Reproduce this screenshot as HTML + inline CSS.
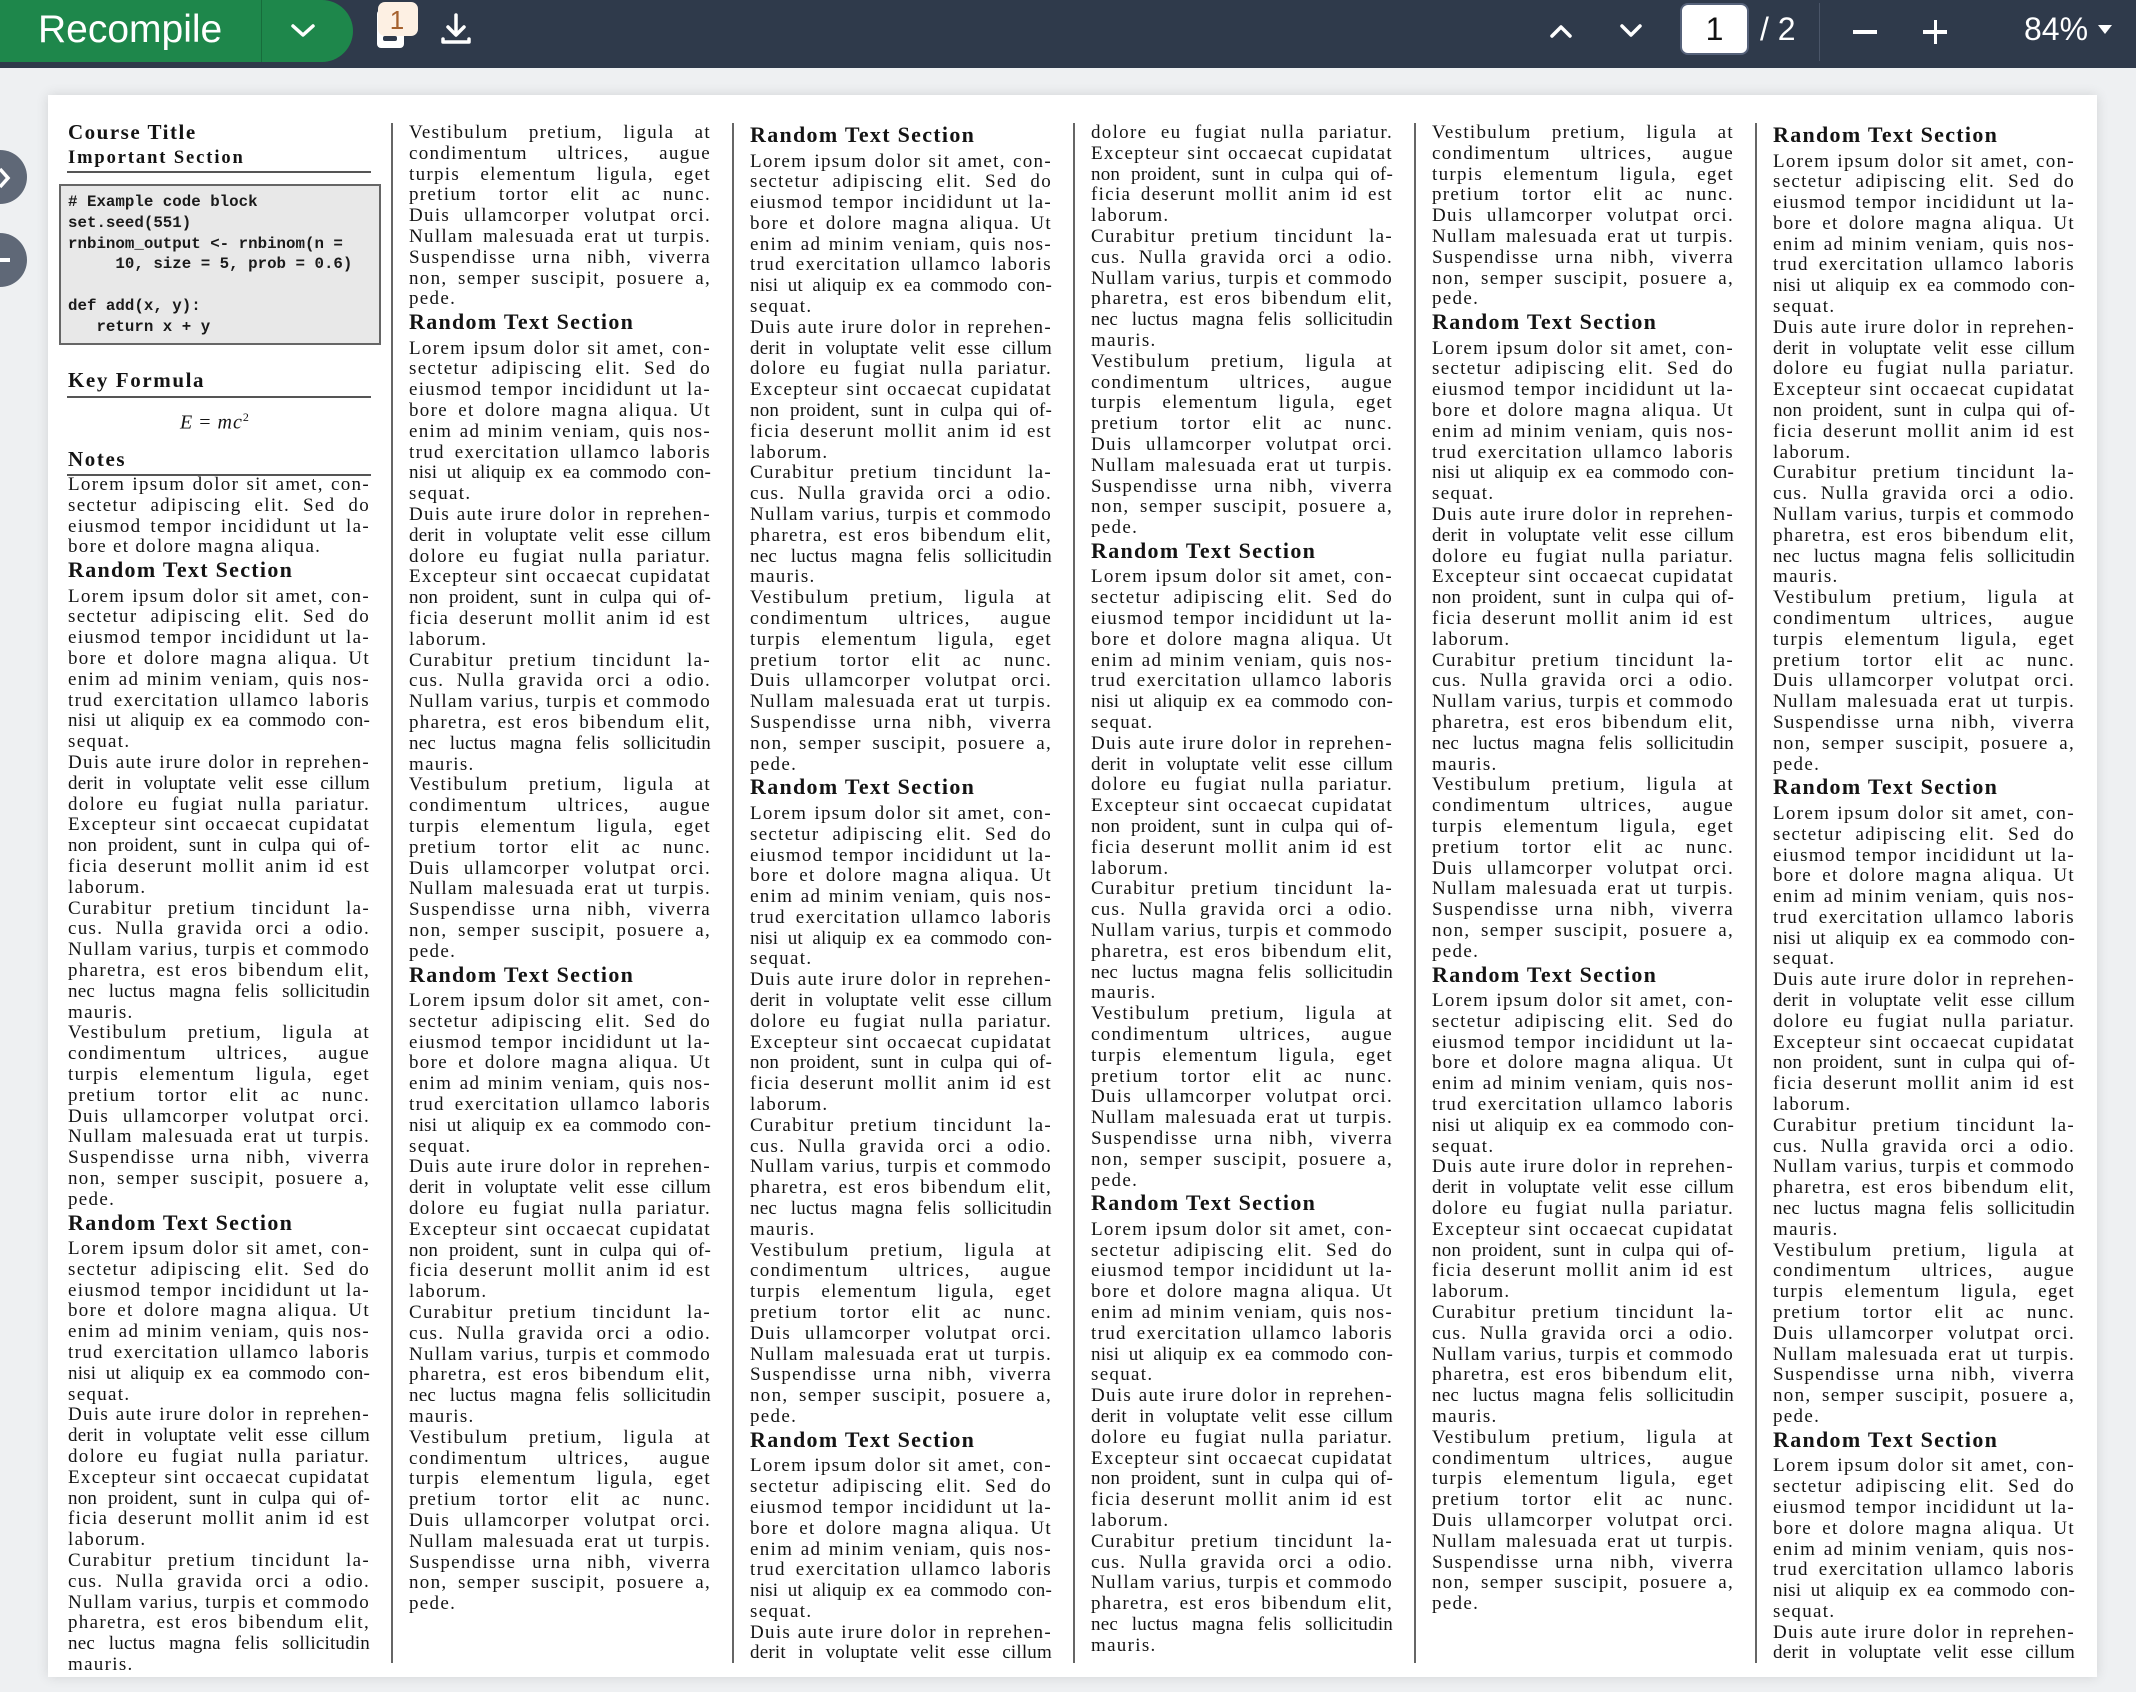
<!DOCTYPE html>
<html><head><meta charset="utf-8">
<style>
*{box-sizing:border-box}
body{margin:0;width:2136px;height:1692px;background:#eef0f2;position:relative;overflow:hidden;font-family:"Liberation Serif",serif}
#tb{position:absolute;left:0;top:0;width:2136px;height:68px;background:#2f3a4b}
#rc{position:absolute;left:0;top:0;width:353px;height:62px;background:#1e874b;border-radius:0 31px 31px 0}
#rc .t{position:absolute;left:38px;top:7px;font:39px/46px "Liberation Sans",sans-serif;color:#fff}
#rc .d{position:absolute;left:261px;top:0;width:1px;height:62px;background:#176c3b}
.wt{position:absolute;color:#fff;font-family:"Liberation Sans",sans-serif}
#page{position:absolute;left:48px;top:95px;width:2049px;height:1582px;background:#fff;box-shadow:0 0 12px rgba(0,0,0,.12)}
.col{position:absolute;top:123px;width:302px;font-size:19px;letter-spacing:1.3px;line-height:20.8px;color:#141414}
.col p{margin:0;height:20.8px;text-align:justify;text-align-last:justify;white-space:normal}
.col p.e{text-align-last:left}
.col p.t{letter-spacing:0.2px}
.col h2{margin:0;height:28.5px;font-size:22px;line-height:24px;font-weight:bold;letter-spacing:1.3px}
.dv{position:absolute;top:123px;width:2px;height:1540px;background:#666}
.circ{position:absolute;left:-27px;width:54px;height:54px;border-radius:50%;background:#5f6877}
.hd{position:absolute;left:68px;font-weight:bold;color:#141414;font-family:"Liberation Serif",serif}
</style></head><body>
<div id="tb">
 <div id="rc"><span class="t">Recompile</span><span class="d"></span>
  <svg style="position:absolute;left:290px;top:22px" width="26" height="18" viewBox="0 0 26 18"><path d="M3 4 L13 13 L23 4" stroke="#fff" stroke-width="3.5" fill="none" stroke-linecap="round" stroke-linejoin="round"/></svg>
 </div>
 <svg style="position:absolute;left:374px;top:0" width="50" height="52" viewBox="0 0 50 52"><rect x="3" y="10" width="27" height="38" rx="4" fill="#fff"/><rect x="9" y="36" width="14" height="5" rx="2" fill="#2f3a4b"/><rect x="4" y="2" width="40" height="34" rx="7" fill="#fdf0e3"/><text x="23" y="29" text-anchor="middle" font-family="Liberation Sans,sans-serif" font-size="26" fill="#a5612e">1</text></svg>
 <svg style="position:absolute;left:440px;top:12px" width="32" height="34" viewBox="0 0 32 34"><path d="M16 3 V22 M8 15 L16 23 L24 15 M3 27 V30 H29 V27" stroke="#fff" stroke-width="3.5" fill="none" stroke-linecap="round" stroke-linejoin="round"/></svg>
 <svg style="position:absolute;left:1548px;top:22px" width="26" height="18" viewBox="0 0 26 18"><path d="M4 14 L13 5 L22 14" stroke="#fff" stroke-width="3.5" fill="none" stroke-linecap="round" stroke-linejoin="round"/></svg>
 <svg style="position:absolute;left:1618px;top:22px" width="26" height="18" viewBox="0 0 26 18"><path d="M4 4 L13 13 L22 4" stroke="#fff" stroke-width="3.5" fill="none" stroke-linecap="round" stroke-linejoin="round"/></svg>
 <div style="position:absolute;left:1680px;top:3px;width:69px;height:52px;background:#fff;border-radius:8px;border:2px solid #56627a;font:32px/48px 'Liberation Sans',sans-serif;color:#111;text-align:center">1</div>
 <div class="wt" style="left:1760px;top:9px;font-size:32px;line-height:40px">/ 2</div>
 <div style="position:absolute;left:1819px;top:3px;width:1px;height:58px;background:#4a5568"></div>
 <div style="position:absolute;left:1853px;top:30px;width:24px;height:3.5px;background:#fff"></div>
 <div style="position:absolute;left:1923px;top:30px;width:24px;height:3.5px;background:#fff"></div>
 <div style="position:absolute;left:1933.5px;top:19.5px;width:3.5px;height:24px;background:#fff"></div>
 <div class="wt" style="left:2024px;top:9px;font-size:32px;line-height:40px">84%</div>
 <svg style="position:absolute;left:2097px;top:24px" width="16" height="12" viewBox="0 0 16 12"><path d="M1 1 H15 L8 10 Z" fill="#fff"/></svg>
</div>
<div class="circ" style="top:150px"></div>
<div class="circ" style="top:233px"></div>
<svg style="position:absolute;left:0;top:165px" width="14" height="26" viewBox="0 0 14 26"><path d="M0 4 L8 13 L0 22" stroke="#fff" stroke-width="3.5" fill="none"/></svg>
<div style="position:absolute;left:0;top:258px;width:10px;height:4px;background:#fff"></div>
<div id="page"></div>

<div class="hd" style="top:119px;font-size:21px;line-height:26px;letter-spacing:1.5px">Course Title</div>
<div class="hd" style="top:146px;font-size:18.5px;line-height:24px;letter-spacing:1.9px">Important Section</div>
<div style="position:absolute;left:67px;top:171px;width:304px;height:2px;background:#555"></div>
<div style="position:absolute;left:59px;top:184px;width:322px;height:161px;background:#e8e8e8;border:2px solid #666"></div>
<div style="position:absolute;left:68px;top:192px;font:bold 15.8px/20.8px 'Liberation Mono',monospace;color:#1a1a1a;white-space:pre"># Example code block
set.seed(551)
rnbinom_output &lt;- rnbinom(n =
     10, size = 5, prob = 0.6)

def add(x, y):
   return x + y</div>
<div class="hd" style="top:367px;font-size:21px;line-height:26px;letter-spacing:1.6px">Key Formula</div>
<div style="position:absolute;left:67px;top:396px;width:304px;height:2px;background:#555"></div>
<div style="position:absolute;left:180px;top:404px;font:italic 20px/26px 'Liberation Serif',serif;color:#141414;letter-spacing:1px">E <span style="font-style:normal">=</span> mc<sup style="font-size:12px;font-style:normal">2</sup></div>
<div class="hd" style="top:446px;font-size:21px;line-height:26px;letter-spacing:1.6px">Notes</div>
<div style="position:absolute;left:67px;top:474px;width:304px;height:2px;background:#555"></div>

<div class="dv" style="left:391px"></div>
<div class="dv" style="left:732px"></div>
<div class="dv" style="left:1073px"></div>
<div class="dv" style="left:1414px"></div>
<div class="dv" style="left:1755px"></div>

<div class="col" style="left:68px;top:475px">
<p>Lorem ipsum dolor sit amet, con-</p><p>sectetur adipiscing elit. Sed do</p><p>eiusmod tempor incididunt ut la-</p><p class="e">bore et dolore magna aliqua.</p>
<h2>Random Text Section</h2>
<p>Lorem ipsum dolor sit amet, con-</p><p>sectetur adipiscing elit. Sed do</p><p>eiusmod tempor incididunt ut la-</p><p>bore et dolore magna aliqua. Ut</p><p>enim ad minim veniam, quis nos-</p><p>trud exercitation ullamco laboris</p><p class="t">nisi ut aliquip ex ea commodo con-</p><p class="e">sequat.</p>
<p>Duis aute irure dolor in reprehen-</p><p class="t">derit in voluptate velit esse cillum</p><p>dolore eu fugiat nulla pariatur.</p><p>Excepteur sint occaecat cupidatat</p><p class="t">non proident, sunt in culpa qui of-</p><p>ficia deserunt mollit anim id est</p><p class="e">laborum.</p>
<p>Curabitur pretium tincidunt la-</p><p>cus. Nulla gravida orci a odio.</p><p>Nullam varius, turpis et commodo</p><p>pharetra, est eros bibendum elit,</p><p class="t">nec luctus magna felis sollicitudin</p><p class="e">mauris.</p>
<p>Vestibulum pretium, ligula at</p><p>condimentum ultrices, augue</p><p>turpis elementum ligula, eget</p><p>pretium tortor elit ac nunc.</p><p>Duis ullamcorper volutpat orci.</p><p>Nullam malesuada erat ut turpis.</p><p>Suspendisse urna nibh, viverra</p><p>non, semper suscipit, posuere a,</p><p class="e">pede.</p>
<h2>Random Text Section</h2>
<p>Lorem ipsum dolor sit amet, con-</p><p>sectetur adipiscing elit. Sed do</p><p>eiusmod tempor incididunt ut la-</p><p>bore et dolore magna aliqua. Ut</p><p>enim ad minim veniam, quis nos-</p><p>trud exercitation ullamco laboris</p><p class="t">nisi ut aliquip ex ea commodo con-</p><p class="e">sequat.</p>
<p>Duis aute irure dolor in reprehen-</p><p class="t">derit in voluptate velit esse cillum</p><p>dolore eu fugiat nulla pariatur.</p><p>Excepteur sint occaecat cupidatat</p><p class="t">non proident, sunt in culpa qui of-</p><p>ficia deserunt mollit anim id est</p><p class="e">laborum.</p>
<p>Curabitur pretium tincidunt la-</p><p>cus. Nulla gravida orci a odio.</p><p>Nullam varius, turpis et commodo</p><p>pharetra, est eros bibendum elit,</p><p class="t">nec luctus magna felis sollicitudin</p><p class="e">mauris.</p>
</div>

<div class="col" style="left:409px">
<p>Vestibulum pretium, ligula at</p><p>condimentum ultrices, augue</p><p>turpis elementum ligula, eget</p><p>pretium tortor elit ac nunc.</p><p>Duis ullamcorper volutpat orci.</p><p>Nullam malesuada erat ut turpis.</p><p>Suspendisse urna nibh, viverra</p><p>non, semper suscipit, posuere a,</p><p class="e">pede.</p>
<h2>Random Text Section</h2>
<p>Lorem ipsum dolor sit amet, con-</p><p>sectetur adipiscing elit. Sed do</p><p>eiusmod tempor incididunt ut la-</p><p>bore et dolore magna aliqua. Ut</p><p>enim ad minim veniam, quis nos-</p><p>trud exercitation ullamco laboris</p><p class="t">nisi ut aliquip ex ea commodo con-</p><p class="e">sequat.</p>
<p>Duis aute irure dolor in reprehen-</p><p class="t">derit in voluptate velit esse cillum</p><p>dolore eu fugiat nulla pariatur.</p><p>Excepteur sint occaecat cupidatat</p><p class="t">non proident, sunt in culpa qui of-</p><p>ficia deserunt mollit anim id est</p><p class="e">laborum.</p>
<p>Curabitur pretium tincidunt la-</p><p>cus. Nulla gravida orci a odio.</p><p>Nullam varius, turpis et commodo</p><p>pharetra, est eros bibendum elit,</p><p class="t">nec luctus magna felis sollicitudin</p><p class="e">mauris.</p>
<p>Vestibulum pretium, ligula at</p><p>condimentum ultrices, augue</p><p>turpis elementum ligula, eget</p><p>pretium tortor elit ac nunc.</p><p>Duis ullamcorper volutpat orci.</p><p>Nullam malesuada erat ut turpis.</p><p>Suspendisse urna nibh, viverra</p><p>non, semper suscipit, posuere a,</p><p class="e">pede.</p>
<h2>Random Text Section</h2>
<p>Lorem ipsum dolor sit amet, con-</p><p>sectetur adipiscing elit. Sed do</p><p>eiusmod tempor incididunt ut la-</p><p>bore et dolore magna aliqua. Ut</p><p>enim ad minim veniam, quis nos-</p><p>trud exercitation ullamco laboris</p><p class="t">nisi ut aliquip ex ea commodo con-</p><p class="e">sequat.</p>
<p>Duis aute irure dolor in reprehen-</p><p class="t">derit in voluptate velit esse cillum</p><p>dolore eu fugiat nulla pariatur.</p><p>Excepteur sint occaecat cupidatat</p><p class="t">non proident, sunt in culpa qui of-</p><p>ficia deserunt mollit anim id est</p><p class="e">laborum.</p>
<p>Curabitur pretium tincidunt la-</p><p>cus. Nulla gravida orci a odio.</p><p>Nullam varius, turpis et commodo</p><p>pharetra, est eros bibendum elit,</p><p class="t">nec luctus magna felis sollicitudin</p><p class="e">mauris.</p>
<p>Vestibulum pretium, ligula at</p><p>condimentum ultrices, augue</p><p>turpis elementum ligula, eget</p><p>pretium tortor elit ac nunc.</p><p>Duis ullamcorper volutpat orci.</p><p>Nullam malesuada erat ut turpis.</p><p>Suspendisse urna nibh, viverra</p><p>non, semper suscipit, posuere a,</p><p class="e">pede.</p>
</div>

<div class="col" style="left:750px">
<h2>Random Text Section</h2>
<p>Lorem ipsum dolor sit amet, con-</p><p>sectetur adipiscing elit. Sed do</p><p>eiusmod tempor incididunt ut la-</p><p>bore et dolore magna aliqua. Ut</p><p>enim ad minim veniam, quis nos-</p><p>trud exercitation ullamco laboris</p><p class="t">nisi ut aliquip ex ea commodo con-</p><p class="e">sequat.</p>
<p>Duis aute irure dolor in reprehen-</p><p class="t">derit in voluptate velit esse cillum</p><p>dolore eu fugiat nulla pariatur.</p><p>Excepteur sint occaecat cupidatat</p><p class="t">non proident, sunt in culpa qui of-</p><p>ficia deserunt mollit anim id est</p><p class="e">laborum.</p>
<p>Curabitur pretium tincidunt la-</p><p>cus. Nulla gravida orci a odio.</p><p>Nullam varius, turpis et commodo</p><p>pharetra, est eros bibendum elit,</p><p class="t">nec luctus magna felis sollicitudin</p><p class="e">mauris.</p>
<p>Vestibulum pretium, ligula at</p><p>condimentum ultrices, augue</p><p>turpis elementum ligula, eget</p><p>pretium tortor elit ac nunc.</p><p>Duis ullamcorper volutpat orci.</p><p>Nullam malesuada erat ut turpis.</p><p>Suspendisse urna nibh, viverra</p><p>non, semper suscipit, posuere a,</p><p class="e">pede.</p>
<h2>Random Text Section</h2>
<p>Lorem ipsum dolor sit amet, con-</p><p>sectetur adipiscing elit. Sed do</p><p>eiusmod tempor incididunt ut la-</p><p>bore et dolore magna aliqua. Ut</p><p>enim ad minim veniam, quis nos-</p><p>trud exercitation ullamco laboris</p><p class="t">nisi ut aliquip ex ea commodo con-</p><p class="e">sequat.</p>
<p>Duis aute irure dolor in reprehen-</p><p class="t">derit in voluptate velit esse cillum</p><p>dolore eu fugiat nulla pariatur.</p><p>Excepteur sint occaecat cupidatat</p><p class="t">non proident, sunt in culpa qui of-</p><p>ficia deserunt mollit anim id est</p><p class="e">laborum.</p>
<p>Curabitur pretium tincidunt la-</p><p>cus. Nulla gravida orci a odio.</p><p>Nullam varius, turpis et commodo</p><p>pharetra, est eros bibendum elit,</p><p class="t">nec luctus magna felis sollicitudin</p><p class="e">mauris.</p>
<p>Vestibulum pretium, ligula at</p><p>condimentum ultrices, augue</p><p>turpis elementum ligula, eget</p><p>pretium tortor elit ac nunc.</p><p>Duis ullamcorper volutpat orci.</p><p>Nullam malesuada erat ut turpis.</p><p>Suspendisse urna nibh, viverra</p><p>non, semper suscipit, posuere a,</p><p class="e">pede.</p>
<h2>Random Text Section</h2>
<p>Lorem ipsum dolor sit amet, con-</p><p>sectetur adipiscing elit. Sed do</p><p>eiusmod tempor incididunt ut la-</p><p>bore et dolore magna aliqua. Ut</p><p>enim ad minim veniam, quis nos-</p><p>trud exercitation ullamco laboris</p><p class="t">nisi ut aliquip ex ea commodo con-</p><p class="e">sequat.</p>
<p>Duis aute irure dolor in reprehen-</p><p class="t">derit in voluptate velit esse cillum</p>
</div>

<div class="col" style="left:1091px">
<p>dolore eu fugiat nulla pariatur.</p><p>Excepteur sint occaecat cupidatat</p><p class="t">non proident, sunt in culpa qui of-</p><p>ficia deserunt mollit anim id est</p><p class="e">laborum.</p>
<p>Curabitur pretium tincidunt la-</p><p>cus. Nulla gravida orci a odio.</p><p>Nullam varius, turpis et commodo</p><p>pharetra, est eros bibendum elit,</p><p class="t">nec luctus magna felis sollicitudin</p><p class="e">mauris.</p>
<p>Vestibulum pretium, ligula at</p><p>condimentum ultrices, augue</p><p>turpis elementum ligula, eget</p><p>pretium tortor elit ac nunc.</p><p>Duis ullamcorper volutpat orci.</p><p>Nullam malesuada erat ut turpis.</p><p>Suspendisse urna nibh, viverra</p><p>non, semper suscipit, posuere a,</p><p class="e">pede.</p>
<h2>Random Text Section</h2>
<p>Lorem ipsum dolor sit amet, con-</p><p>sectetur adipiscing elit. Sed do</p><p>eiusmod tempor incididunt ut la-</p><p>bore et dolore magna aliqua. Ut</p><p>enim ad minim veniam, quis nos-</p><p>trud exercitation ullamco laboris</p><p class="t">nisi ut aliquip ex ea commodo con-</p><p class="e">sequat.</p>
<p>Duis aute irure dolor in reprehen-</p><p class="t">derit in voluptate velit esse cillum</p><p>dolore eu fugiat nulla pariatur.</p><p>Excepteur sint occaecat cupidatat</p><p class="t">non proident, sunt in culpa qui of-</p><p>ficia deserunt mollit anim id est</p><p class="e">laborum.</p>
<p>Curabitur pretium tincidunt la-</p><p>cus. Nulla gravida orci a odio.</p><p>Nullam varius, turpis et commodo</p><p>pharetra, est eros bibendum elit,</p><p class="t">nec luctus magna felis sollicitudin</p><p class="e">mauris.</p>
<p>Vestibulum pretium, ligula at</p><p>condimentum ultrices, augue</p><p>turpis elementum ligula, eget</p><p>pretium tortor elit ac nunc.</p><p>Duis ullamcorper volutpat orci.</p><p>Nullam malesuada erat ut turpis.</p><p>Suspendisse urna nibh, viverra</p><p>non, semper suscipit, posuere a,</p><p class="e">pede.</p>
<h2>Random Text Section</h2>
<p>Lorem ipsum dolor sit amet, con-</p><p>sectetur adipiscing elit. Sed do</p><p>eiusmod tempor incididunt ut la-</p><p>bore et dolore magna aliqua. Ut</p><p>enim ad minim veniam, quis nos-</p><p>trud exercitation ullamco laboris</p><p class="t">nisi ut aliquip ex ea commodo con-</p><p class="e">sequat.</p>
<p>Duis aute irure dolor in reprehen-</p><p class="t">derit in voluptate velit esse cillum</p><p>dolore eu fugiat nulla pariatur.</p><p>Excepteur sint occaecat cupidatat</p><p class="t">non proident, sunt in culpa qui of-</p><p>ficia deserunt mollit anim id est</p><p class="e">laborum.</p>
<p>Curabitur pretium tincidunt la-</p><p>cus. Nulla gravida orci a odio.</p><p>Nullam varius, turpis et commodo</p><p>pharetra, est eros bibendum elit,</p><p class="t">nec luctus magna felis sollicitudin</p><p class="e">mauris.</p>
</div>

<div class="col" style="left:1432px">
<p>Vestibulum pretium, ligula at</p><p>condimentum ultrices, augue</p><p>turpis elementum ligula, eget</p><p>pretium tortor elit ac nunc.</p><p>Duis ullamcorper volutpat orci.</p><p>Nullam malesuada erat ut turpis.</p><p>Suspendisse urna nibh, viverra</p><p>non, semper suscipit, posuere a,</p><p class="e">pede.</p>
<h2>Random Text Section</h2>
<p>Lorem ipsum dolor sit amet, con-</p><p>sectetur adipiscing elit. Sed do</p><p>eiusmod tempor incididunt ut la-</p><p>bore et dolore magna aliqua. Ut</p><p>enim ad minim veniam, quis nos-</p><p>trud exercitation ullamco laboris</p><p class="t">nisi ut aliquip ex ea commodo con-</p><p class="e">sequat.</p>
<p>Duis aute irure dolor in reprehen-</p><p class="t">derit in voluptate velit esse cillum</p><p>dolore eu fugiat nulla pariatur.</p><p>Excepteur sint occaecat cupidatat</p><p class="t">non proident, sunt in culpa qui of-</p><p>ficia deserunt mollit anim id est</p><p class="e">laborum.</p>
<p>Curabitur pretium tincidunt la-</p><p>cus. Nulla gravida orci a odio.</p><p>Nullam varius, turpis et commodo</p><p>pharetra, est eros bibendum elit,</p><p class="t">nec luctus magna felis sollicitudin</p><p class="e">mauris.</p>
<p>Vestibulum pretium, ligula at</p><p>condimentum ultrices, augue</p><p>turpis elementum ligula, eget</p><p>pretium tortor elit ac nunc.</p><p>Duis ullamcorper volutpat orci.</p><p>Nullam malesuada erat ut turpis.</p><p>Suspendisse urna nibh, viverra</p><p>non, semper suscipit, posuere a,</p><p class="e">pede.</p>
<h2>Random Text Section</h2>
<p>Lorem ipsum dolor sit amet, con-</p><p>sectetur adipiscing elit. Sed do</p><p>eiusmod tempor incididunt ut la-</p><p>bore et dolore magna aliqua. Ut</p><p>enim ad minim veniam, quis nos-</p><p>trud exercitation ullamco laboris</p><p class="t">nisi ut aliquip ex ea commodo con-</p><p class="e">sequat.</p>
<p>Duis aute irure dolor in reprehen-</p><p class="t">derit in voluptate velit esse cillum</p><p>dolore eu fugiat nulla pariatur.</p><p>Excepteur sint occaecat cupidatat</p><p class="t">non proident, sunt in culpa qui of-</p><p>ficia deserunt mollit anim id est</p><p class="e">laborum.</p>
<p>Curabitur pretium tincidunt la-</p><p>cus. Nulla gravida orci a odio.</p><p>Nullam varius, turpis et commodo</p><p>pharetra, est eros bibendum elit,</p><p class="t">nec luctus magna felis sollicitudin</p><p class="e">mauris.</p>
<p>Vestibulum pretium, ligula at</p><p>condimentum ultrices, augue</p><p>turpis elementum ligula, eget</p><p>pretium tortor elit ac nunc.</p><p>Duis ullamcorper volutpat orci.</p><p>Nullam malesuada erat ut turpis.</p><p>Suspendisse urna nibh, viverra</p><p>non, semper suscipit, posuere a,</p><p class="e">pede.</p>
</div>

<div class="col" style="left:1773px">
<h2>Random Text Section</h2>
<p>Lorem ipsum dolor sit amet, con-</p><p>sectetur adipiscing elit. Sed do</p><p>eiusmod tempor incididunt ut la-</p><p>bore et dolore magna aliqua. Ut</p><p>enim ad minim veniam, quis nos-</p><p>trud exercitation ullamco laboris</p><p class="t">nisi ut aliquip ex ea commodo con-</p><p class="e">sequat.</p>
<p>Duis aute irure dolor in reprehen-</p><p class="t">derit in voluptate velit esse cillum</p><p>dolore eu fugiat nulla pariatur.</p><p>Excepteur sint occaecat cupidatat</p><p class="t">non proident, sunt in culpa qui of-</p><p>ficia deserunt mollit anim id est</p><p class="e">laborum.</p>
<p>Curabitur pretium tincidunt la-</p><p>cus. Nulla gravida orci a odio.</p><p>Nullam varius, turpis et commodo</p><p>pharetra, est eros bibendum elit,</p><p class="t">nec luctus magna felis sollicitudin</p><p class="e">mauris.</p>
<p>Vestibulum pretium, ligula at</p><p>condimentum ultrices, augue</p><p>turpis elementum ligula, eget</p><p>pretium tortor elit ac nunc.</p><p>Duis ullamcorper volutpat orci.</p><p>Nullam malesuada erat ut turpis.</p><p>Suspendisse urna nibh, viverra</p><p>non, semper suscipit, posuere a,</p><p class="e">pede.</p>
<h2>Random Text Section</h2>
<p>Lorem ipsum dolor sit amet, con-</p><p>sectetur adipiscing elit. Sed do</p><p>eiusmod tempor incididunt ut la-</p><p>bore et dolore magna aliqua. Ut</p><p>enim ad minim veniam, quis nos-</p><p>trud exercitation ullamco laboris</p><p class="t">nisi ut aliquip ex ea commodo con-</p><p class="e">sequat.</p>
<p>Duis aute irure dolor in reprehen-</p><p class="t">derit in voluptate velit esse cillum</p><p>dolore eu fugiat nulla pariatur.</p><p>Excepteur sint occaecat cupidatat</p><p class="t">non proident, sunt in culpa qui of-</p><p>ficia deserunt mollit anim id est</p><p class="e">laborum.</p>
<p>Curabitur pretium tincidunt la-</p><p>cus. Nulla gravida orci a odio.</p><p>Nullam varius, turpis et commodo</p><p>pharetra, est eros bibendum elit,</p><p class="t">nec luctus magna felis sollicitudin</p><p class="e">mauris.</p>
<p>Vestibulum pretium, ligula at</p><p>condimentum ultrices, augue</p><p>turpis elementum ligula, eget</p><p>pretium tortor elit ac nunc.</p><p>Duis ullamcorper volutpat orci.</p><p>Nullam malesuada erat ut turpis.</p><p>Suspendisse urna nibh, viverra</p><p>non, semper suscipit, posuere a,</p><p class="e">pede.</p>
<h2>Random Text Section</h2>
<p>Lorem ipsum dolor sit amet, con-</p><p>sectetur adipiscing elit. Sed do</p><p>eiusmod tempor incididunt ut la-</p><p>bore et dolore magna aliqua. Ut</p><p>enim ad minim veniam, quis nos-</p><p>trud exercitation ullamco laboris</p><p class="t">nisi ut aliquip ex ea commodo con-</p><p class="e">sequat.</p>
<p>Duis aute irure dolor in reprehen-</p><p class="t">derit in voluptate velit esse cillum</p>
</div>
</body></html>
